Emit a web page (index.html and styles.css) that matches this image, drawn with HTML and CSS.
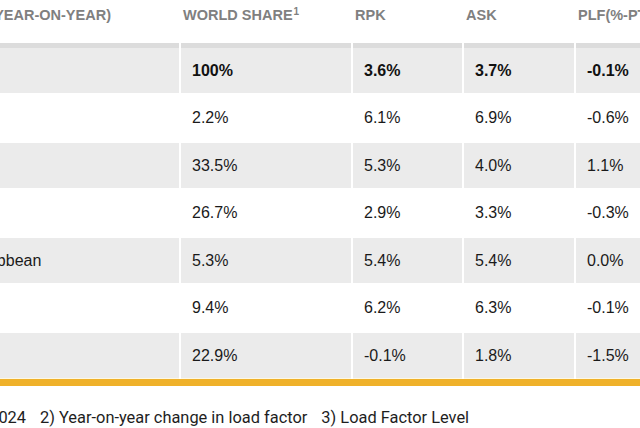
FILE: index.html
```html
<!DOCTYPE html>
<html lang="en">
<head>
<meta charset="utf-8">
<title>Passenger market</title>
<link rel="stylesheet" href="styles.css">
</head>
<body>
<div class="viewport">
  <div class="panel">
    <table class="market">
      <colgroup>
        <col class="c-region">
        <col class="c-share">
        <col class="c-rpk">
        <col class="c-ask">
        <col class="c-plf">
        <col class="c-lvl">
      </colgroup>
      <thead>
        <tr>
          <th class="h-region">REGIONAL MARKET (YEAR-ON-YEAR)</th>
          <th>WORLD SHARE<sup>1</sup></th>
          <th>RPK</th>
          <th>ASK</th>
          <th>PLF(%-PT)<sup>2</sup></th>
          <th>PLF(LEVEL)<sup>3</sup></th>
        </tr>
      </thead>
      <tbody>
        <tr class="shade total">
          <td>World</td><td>100%</td><td>3.6%</td><td>3.7%</td><td>-0.1%</td><td>83.0%</td>
        </tr>
        <tr class="plain">
          <td>Africa</td><td>2.2%</td><td>6.1%</td><td>6.9%</td><td>-0.6%</td><td>74.1%</td>
        </tr>
        <tr class="shade">
          <td>Asia Pacific</td><td>33.5%</td><td>5.3%</td><td>4.0%</td><td>1.1%</td><td>83.3%</td>
        </tr>
        <tr class="plain">
          <td>Europe</td><td>26.7%</td><td>2.9%</td><td>3.3%</td><td>-0.3%</td><td>84.5%</td>
        </tr>
        <tr class="shade">
          <td>Latin America &amp; Caribbean</td><td>5.3%</td><td>5.4%</td><td>5.4%</td><td>0.0%</td><td>83.9%</td>
        </tr>
        <tr class="plain">
          <td>Middle East</td><td>9.4%</td><td>6.2%</td><td>6.3%</td><td>-0.1%</td><td>80.2%</td>
        </tr>
        <tr class="shade last">
          <td>North America</td><td>22.9%</td><td>-0.1%</td><td>1.8%</td><td>-1.5%</td><td>82.9%</td>
        </tr>
      </tbody>
    </table>
    <div class="notes">
      <span>1) % of industry RPKs in 2024</span>
      <span>2) Year-on-year change in load factor</span>
      <span>3) Load Factor Level</span>
    </div>
  </div>
</div>
</body>
</html>
```

FILE: styles.css
```css
html, body {
  margin: 0;
  padding: 0;
  background: #ffffff;
}

.viewport {
  width: 640px;
  height: 428px;
  overflow: hidden;
}

.panel {
  margin-left: -162px;
  width: 1000px;
}

.market {
  table-layout: fixed;
  border-collapse: separate;
  border-spacing: 2px 0;
  border-bottom: 7px solid #efb12a;
  font-family: "Liberation Sans", Arial, sans-serif;
  width: 930px;
}

.c-region { width: 339px; }
.c-share { width: 170px; }
.c-rpk { width: 109px; }
.c-ask { width: 110px; }
.c-plf { width: 110px; }
.c-lvl { width: 80px; }

.market th {
  height: 43px;
  padding: 7px 2px 0;
  box-sizing: border-box;
  vertical-align: top;
  text-align: left;
  font-size: 14.5px;
  font-weight: bold;
  color: #808080;
  white-space: nowrap;
  overflow: hidden;
}

.market th.h-region {
  padding-left: 3px;
}

.market th sup {
  font-size: 10px;
  line-height: 0;
  vertical-align: 5px;
  margin-left: 1px;
}

.market td {
  padding: 0 11px;
  box-sizing: content-box;
  height: 45px;
  vertical-align: middle;
  font-size: 16px;
  color: #1a1a1a;
  white-space: nowrap;
}

.market .plain td {
  border-top: 2px solid #ffffff;
}

.market .shade td {
  background: #ebebeb;
  border-top: 3px solid #ffffff;
}

.market .total td {
  border-top: 5px solid #dcdcdc;
  font-weight: bold;
  color: #111111;
}

.market .last td {
  border-bottom: 1px solid #fdf8e4;
}

.notes {
  display: flex;
  gap: 14px;
  margin-top: 22px;
  margin-left: -26px;
  font-family: Roboto, "Noto Sans", sans-serif;
  font-size: 16.4px;
  line-height: 20px;
  color: #1e1e1e;
  white-space: nowrap;
}
```
